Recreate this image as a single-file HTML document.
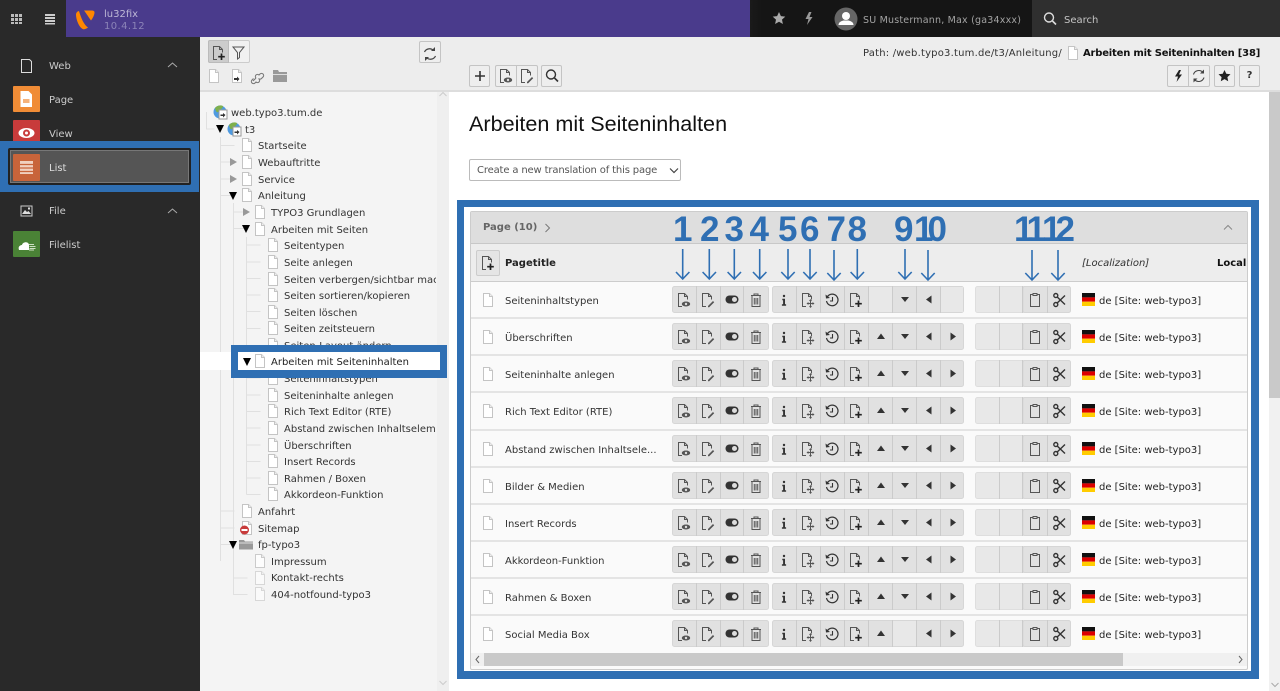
<!DOCTYPE html>
<html lang="de"><head><meta charset="utf-8"><title>TYPO3 List</title>
<style>
*{box-sizing:border-box}
html,body{margin:0;padding:0;width:1280px;height:691px;overflow:hidden;background:#fff}
body{position:relative;font:10px/16px "DejaVu Sans","Liberation Sans",sans-serif;color:#333}
.a{position:absolute}
.x{position:absolute;white-space:nowrap}
svg{display:block;overflow:visible}
.i{fill:none;stroke:#555;stroke-width:1;}
.m{color:#ccc;left:49px}
.t{position:absolute;white-space:nowrap;height:16px;line-height:16px;color:#333}
.l0{left:58px}.l1{left:71px}.l2{left:84px}
.n{position:absolute;top:212px;font:bold 35px/36px "Liberation Sans",sans-serif;color:#2f6fb3;letter-spacing:-1px}
.r{position:absolute;left:471px;width:776px;height:37px;background:#fafafa;border-bottom:2px solid #e4e4e4}
.r .p{position:absolute;left:34px;top:12px;line-height:16px;white-space:nowrap}
.r .f{position:absolute;left:628px;top:12px;line-height:16px;white-space:nowrap;color:#222}
.btn{position:absolute;background:#eee;border:1px solid #c4c4c4;border-radius:2px;height:22px}
</style></head><body>

<svg width="0" height="0" style="position:absolute">
<defs>
<g id="pg"><path d="M3.500 1.500h6l3 3v10h-9z" fill="#fff" stroke="#c4c4c4"/><path d="M9.500 1.500v3h3" fill="#eee" stroke="#c4c4c4"/></g>
<g id="doc"><path d="M6 14.500H2.500v-13h6l3 3v3" class="i"/><path d="M8.500 1.500v3h3" class="i"/></g>
<g id="dv"><use href="#doc"/><ellipse cx="10" cy="12" rx="4.200" ry="2.500" fill="#555"/><circle cx="10" cy="12" r="1.200" fill="#ddd"/></g>
<g id="de"><use href="#doc"/><path d="M8 14l5-5 1.200 1.200-5 5H8z" fill="#555"/></g>
<g id="tg"><rect x="1.500" y="4" width="13" height="8" rx="4" fill="#333"/><circle cx="10.500" cy="8" r="2.500" fill="#ddd"/></g>
<g id="tr"><path d="M3 3.500h10M6 3.500V2h4v1.500M4 3.500v11h8v-11M6.300 6v6.500M8 6v6.500M9.700 6v6.500" class="i"/></g>
<g id="inf"><circle cx="8" cy="4" r="1.200" fill="#333"/><path d="M6.300 6.800h2.700v5.500h1.100v1.400H5.900v-1.400h1.200V8.200h-.8z" fill="#333"/></g>
<g id="dm"><use href="#doc"/><path d="M10.500 8v7.500M7 11.500h7" stroke="#555" stroke-width="1.100"/><path d="M10.500 7l-1.500 2h3zM10.500 16l-1.500-2h3zM6.500 11.500l2-1.500v3zM14.500 11.500l-2-1.500v3z" fill="#555"/></g>
<g id="hi"><path d="M3.500 4.500A5.800 5.800 0 1 1 2.500 9" fill="none" stroke="#333" stroke-width="1.200"/><path d="M1.500 2.500l.5 4 4-.5z" fill="#333"/><path d="M8.500 5v4H6" fill="none" stroke="#333" stroke-width="1.100"/></g>
<g id="dp"><use href="#doc"/><path d="M10.500 8.500v6.500M7.200 11.700h6.600" stroke="#222" stroke-width="1.700"/></g>
<g id="up"><path d="M8 5l4 5.500H4z" fill="#333"/></g>
<g id="dn"><path d="M8 10.500L4 5.500h8z" fill="#333"/></g>
<g id="lf"><path d="M5 8l5.500-4v8z" fill="#333"/></g>
<g id="rt"><path d="M11 8L5.500 4v8z" fill="#333"/></g>
<g id="cl"><path d="M6 2.500H3.500v12h9v-12H10" class="i"/><rect x="6" y="1.500" width="4" height="2" fill="#ddd" stroke="#555"/></g>
<g id="sc"><circle cx="4.800" cy="3.500" r="2" fill="none" stroke="#333" stroke-width="1.400"/><circle cx="4.800" cy="12.500" r="2" fill="none" stroke="#333" stroke-width="1.400"/><path d="M6.200 5l7.800 7.500M6.200 11L14 3.500" stroke="#333" stroke-width="1.400"/></g>
<g id="fl"><rect width="13" height="4.400" fill="#111"/><rect y="4.400" width="13" height="4.300" fill="#d00"/><rect y="8.700" width="13" height="4.300" fill="#fc0"/></g>
<g id="g1">
<rect x=".5" y=".5" width="96" height="26" rx="2" fill="#e1e1e1" stroke="#d6d6d6"/>
<path d="M24.500 0v27M48.500 0v27M71.500 0v27" stroke="#cbcbcb"/>
<use href="#dv" x="4" y="6"/><use href="#de" x="28" y="6"/><use href="#tg" x="52" y="5.500"/><use href="#tr" x="76" y="6"/>
</g>
<g id="g2">
<rect x="100.500" y=".5" width="191" height="26" rx="2" fill="#e1e1e1" stroke="#d6d6d6"/>
<path d="M124.500 0v27M148.500 0v27M172.500 0v27M196.500 0v27M220.500 0v27M244.500 0v27M268.500 0v27" stroke="#cbcbcb"/>
<use href="#inf" x="104" y="6"/><use href="#dm" x="128" y="6"/><use href="#hi" x="152" y="6"/><use href="#dp" x="176" y="6"/>
</g>
<g id="g3">
<rect x="303.500" y=".5" width="95" height="26" rx="2" fill="#e8e8e8" stroke="#dedede"/>
<rect x="351" y=".5" width="47.500" height="26" rx="2" fill="#e1e1e1" stroke="#d6d6d6"/>
<path d="M327.500 0v27M350.500 0v27M375.500 0v27" stroke="#cbcbcb"/>
<use href="#cl" x="355" y="6"/><use href="#sc" x="379" y="6"/>
</g>
<g id="A"><use href="#g1"/><use href="#g2"/><use href="#g3"/>
<rect x="197" y="1" width="23" height="25" fill="#e8e8e8"/><rect x="269" y="1" width="22" height="25" fill="#e8e8e8"/>
<use href="#dn" x="225" y="5.500"/><use href="#lf" x="249" y="5.500"/></g>
<g id="B"><use href="#g1"/><use href="#g2"/><use href="#g3"/>
<use href="#up" x="201" y="5.500"/><use href="#dn" x="225" y="5.500"/><use href="#lf" x="249" y="5.500"/><use href="#rt" x="273" y="5.500"/></g>
<g id="C"><use href="#g1"/><use href="#g2"/><use href="#g3"/>
<rect x="221" y="1" width="23" height="25" fill="#e8e8e8"/>
<use href="#up" x="201" y="5.500"/><use href="#lf" x="249" y="5.500"/><use href="#rt" x="273" y="5.500"/></g>
<g id="gb"><circle cx="7" cy="7" r="6.500" fill="#4f9ae0"/><path d="M2 3a6.500 6.500 0 0 1 8-2c0 3-3 3-4 5s-3 2-4-3z" fill="#7fb04c"/><rect x="6" y="5" width="8" height="9" fill="#fff" stroke="#999"/><path d="M7.500 9.500h2.500V8l2.500 2-2.500 2.500V11H7.500z" fill="#333"/></g>
</defs>
</svg>

<!-- top bar -->
<div class="a" style="left:0;top:0;width:66px;height:37px;background:#292929"></div>
<div class="a" style="left:66px;top:0;width:684px;height:37px;background:#4a3b8c"></div>
<div class="a" style="left:750px;top:0;width:282px;height:37px;background:linear-gradient(90deg,#1a1a1a 0,#151515 12px)"></div>
<div class="a" style="left:1032px;top:0;width:248px;height:37px;background:#2f2f2f"></div>
<svg class="a" style="left:0;top:0" width="1280" height="37">
<g fill="#bbb"><rect x="11" y="14" width="3" height="3"/><rect x="15" y="14" width="3" height="3"/><rect x="19" y="14" width="3" height="3"/><rect x="11" y="18" width="3" height="3"/><rect x="15" y="18" width="3" height="3"/><rect x="19" y="18" width="3" height="3"/><rect x="11" y="22" width="3" height="2"/><rect x="15" y="22" width="3" height="2"/><rect x="19" y="22" width="3" height="2"/></g>
<g fill="#ccc"><rect x="45" y="14" width="10" height="2"/><rect x="45" y="17" width="10" height="2"/><rect x="45" y="20" width="10" height="2"/><rect x="45" y="23" width="10" height="1.500"/></g>
<path d="M76 14.500c0-1.500 1-3 3-3.500 2 7 5 14 9 16.500-1.500 1-3 1.800-4 1.800-4 0-8-9-8-14.800zM84 10.500h7.500c2 0 3 .5 3 2 0 2-1.500 5.500-3.500 8-2.500-3.500-5-7.500-7-10z" fill="#ff8700"/>
<path d="M779 12l1.900 4.100 4.400.5-3.300 3 .9 4.400-3.900-2.300-3.900 2.300.9-4.400-3.300-3 4.400-.5z" fill="#aaa"/>
<path d="M809 12l-3.500 7h3l-1.500 6 5.500-8h-3l2-5z" fill="#999"/>
<circle cx="846" cy="19" r="11.500" fill="#666"/>
<circle cx="846" cy="16" r="4" fill="#fff"/><path d="M838.500 25c0-3 3-4 5-4.500h5c2 .5 5 1.500 5 4.500z" fill="#fff"/>
<circle cx="1049" cy="17.500" r="4.500" fill="none" stroke="#ddd" stroke-width="1.400"/><path d="M1052.500 21l3.500 3.500" stroke="#ddd" stroke-width="1.600"/>
</svg>
<div class="x" style="left:104px;top:7px;color:#bdb8d6;font-size:10px">lu32fix</div>
<div class="x" style="left:104px;top:19px;color:#8c84b8;font-size:10px;letter-spacing:.4px">10.4.12</div>
<div class="x" style="left:863px;top:13px;color:#a3a3a3;font-size:9.500px;letter-spacing:.2px">SU Mustermann, Max (ga34xxx)</div>
<div class="x" style="left:1064px;top:13px;color:#c4c4c4">Search</div>

<!-- module menu -->
<div class="a" style="left:0;top:37px;width:200px;height:654px;background:#292929"></div>
<svg class="a" style="left:0;top:37px" width="200" height="654">
<path d="M21.500 22.500h8l2 2v11h-10z" fill="none" stroke="#ddd"/>
<path d="M168 30l4.500-4 4.500 4" fill="none" stroke="#aaa"/>
<rect x="13" y="49" width="27" height="26" rx="1" fill="#f08c36"/>
<path d="M20.500 54h8l3.500 3.500V70H20.500z" fill="#fff"/><rect x="23" y="62" width="6.500" height="4" fill="#f5b27a"/>
<rect x="13" y="83" width="27" height="26" rx="1" fill="#c83b3b"/>
<ellipse cx="26.500" cy="96" rx="8" ry="5" fill="#fff"/><circle cx="26.500" cy="96" r="3.500" fill="#c83b3b"/><circle cx="26.500" cy="96" r="1.500" fill="#fff"/>
<path d="M168 176l4.500-4 4.500 4" fill="none" stroke="#aaa"/>
<rect x="21" y="169" width="11" height="10" fill="none" stroke="#ccc"/><path d="M22 177l3-4 2 2 1.500-1 2.500 3z" fill="#ddd"/><rect x="28" y="170.500" width="2" height="2" fill="#ddd"/>
<rect x="13" y="194" width="27" height="26" rx="1" fill="#4a8236"/>
<path d="M19 213c-1.500-4 2-5 3-5 .5-3 6-4 7-.5v5.500z" fill="#fff"/><path d="M29 207.500h5M29.500 209.500h6M29.500 211.500h6M29 213h5" stroke="#cfe0c4"/>
</svg>
<div class="x m" style="top:59px">Web</div>
<div class="x m" style="top:93px">Page</div>
<div class="x m" style="top:127px">View</div>
<div class="x m" style="top:204px">File</div>
<div class="x m" style="top:238px">Filelist</div>
<div class="a" style="left:0;top:141px;width:199px;height:51px;background:#2f6fb3"></div>
<div class="a" style="left:8px;top:148px;width:183px;height:37px;background:#555;border:2px solid #222;box-shadow:inset 0 0 0 1px #777;border-radius:2px"></div>
<svg class="a" style="left:13px;top:154px" width="27" height="27"><rect width="27" height="27" rx="1" fill="#c8643a"/><path d="M7 7h13v13H7z" fill="#f0d0bf"/><path d="M6 10.500h15M6 14h15M6 17.500h15" stroke="#c8643a" stroke-width="1.200"/></svg>
<div class="x" style="left:49px;top:161px;color:#ddd">List</div>

<!-- tree pane -->
<div class="a" style="left:200px;top:37px;width:249px;height:654px;background:#f4f4f4"></div>
<div class="a" style="left:200px;top:37px;width:249px;height:55px;background:#ededed;border-bottom:2px solid #ddd"></div>
<div class="a" style="left:437px;top:92px;width:12px;height:599px;background:#efefef"></div>
<div class="a" style="left:208px;top:40px;width:42px;height:23px;background:#f1f1f1;border:1px solid #ccc;border-radius:2px"></div>
<div class="a" style="left:208px;top:40px;width:21px;height:23px;background:#ccc;border:1px solid #bbb;border-radius:2px 0 0 2px"></div>
<div class="btn" style="left:419px;top:41px;width:22px"></div>
<svg class="a" style="left:200px;top:37px" width="249" height="654">
<use href="#dp" x="11" y="8"/>
<path d="M33 10h11l-4.500 5.500v5l-2 1.500v-6.500z" fill="none" stroke="#555"/>
<path d="M224.500 15a5.500 5.500 0 0 1 9-1.500M235.500 19a5.500 5.500 0 0 1-9 1.500" fill="none" stroke="#444" stroke-width="1.200"/><path d="M235 10v4h-4zM225 24v-4h4z" fill="#444"/>
<use href="#pg" x="6" y="31"/>
<use href="#pg" x="29" y="31"/><path d="M34 41h3v-1.500l2.500 2.500-2.500 2.500V43h-3z" fill="#333"/>
<path d="M53 44l3-3M56 41a2 2 0 0 1 3-3l1-1a2 2 0 0 1 3 3l-1.500 1.500a2 2 0 0 1-3 0M59 42a2 2 0 0 1-3 3l-1 1a2 2 0 0 1-3-3l1.500-1.500" fill="none" stroke="#777" stroke-width="1.100"/>
<path d="M73 33h5l1 2h8v10H73z" fill="#999"/><rect x="73" y="37" width="14" height="1" fill="#ddd"/>
<path d="M239.500 59l3.500-3.500 3.500 3.500" fill="none" stroke="#ccc"/>
<path d="M239.500 644l3.500 3.500 3.500-3.500" fill="none" stroke="#ccc"/>
<!-- tree lines -->
<g stroke="#e0e0e0" fill="none">
<path d="M6.500 75v17h8M20.500 100v424M20.500 108.500h14M20.500 125h14M20.500 142h14M20.500 158.500h14M20.500 474h14M20.500 491h14M20.500 507.500h14"/>
<path d="M33.500 166v375M33.500 175h14M33.500 191.500h14M33.500 524.500v33.500M33.500 541h14M33.500 557.500h14"/>
<path d="M46.500 200v257.500M46.500 208h14M46.500 225h14M46.500 241.500h14M46.500 258h14M46.500 274.500h14M46.500 291.500h14M46.500 341h14M46.500 358h14M46.500 374.500h14M46.500 391h14M46.500 408h14M46.500 424.500h14M46.500 441h14M46.500 457.500h14"/>
</g>
<use href="#gb" x="13" y="68"/><use href="#gb" x="27" y="85"/>
<path d="M16 88h8l-4 8z" fill="#000"/>
<use href="#pg" x="39" y="100"/>
<path d="M30 121l7 4-7 4z" fill="#999"/><use href="#pg" x="39" y="117"/>
<path d="M30 138l7 4-7 4z" fill="#999"/><use href="#pg" x="39" y="134"/>
<path d="M29 155h8l-4 8z" fill="#000"/><use href="#pg" x="39" y="150"/>
<path d="M43 171l7 4-7 4z" fill="#999"/><use href="#pg" x="52" y="167"/>
<path d="M42 188h8l-4 8z" fill="#000"/><use href="#pg" x="52" y="184"/>
<use href="#pg" x="65" y="200"/><use href="#pg" x="65" y="217"/><use href="#pg" x="65" y="234"/><use href="#pg" x="65" y="250"/><use href="#pg" x="65" y="267"/><use href="#pg" x="65" y="283"/><use href="#pg" x="65" y="300"/>
<use href="#pg" x="65" y="333"/><use href="#pg" x="65" y="350"/><use href="#pg" x="65" y="366"/><use href="#pg" x="65" y="383"/><use href="#pg" x="65" y="400"/><use href="#pg" x="65" y="416"/><use href="#pg" x="65" y="433"/><use href="#pg" x="65" y="449"/>
<use href="#pg" x="39" y="466"/><use href="#pg" x="39" y="483"/><circle cx="44.500" cy="493" r="4.500" fill="#c83b3b"/><rect x="41.500" y="492" width="6" height="2" fill="#fff"/>
<path d="M29 504h8l-4 8z" fill="#000"/><path d="M39 503h5l1 1.500h8v8H39z" fill="#999"/><rect x="39" y="505.500" width="14" height="1" fill="#ddd"/>
<g opacity=".85"><use href="#pg" x="52" y="516"/></g><g opacity=".6"><use href="#pg" x="52" y="533"/><use href="#pg" x="52" y="549"/></g>
</svg>
<div class="a" style="left:200px;top:93px;width:236px;height:598px;overflow:hidden">
<div class="t" style="left:31px;top:13px">web.typo3.tum.de</div>
<div class="t" style="left:45px;top:30px">t3</div>
<div class="t l0" style="top:46px">Startseite</div>
<div class="t l0" style="top:63px">Webauftritte</div>
<div class="t l0" style="top:80px">Service</div>
<div class="t l0" style="top:96px">Anleitung</div>
<div class="t l1" style="top:113px">TYPO3 Grundlagen</div>
<div class="t l1" style="top:130px">Arbeiten mit Seiten</div>
<div class="t l2" style="top:146px">Seitentypen</div>
<div class="t l2" style="top:163px">Seite anlegen</div>
<div class="t l2" style="top:180px">Seiten verbergen/sichtbar machen</div>
<div class="t l2" style="top:196px">Seiten sortieren/kopieren</div>
<div class="t l2" style="top:213px">Seiten löschen</div>
<div class="t l2" style="top:229px">Seiten zeitsteuern</div>
<div class="t l2" style="top:246px">Seiten-Layout ändern</div>
<div class="t l2" style="top:279px">Seiteninhaltstypen</div>
<div class="t l2" style="top:296px">Seiteninhalte anlegen</div>
<div class="t l2" style="top:312px">Rich Text Editor (RTE)</div>
<div class="t l2" style="top:329px">Abstand zwischen Inhaltselementen</div>
<div class="t l2" style="top:346px">Überschriften</div>
<div class="t l2" style="top:362px">Insert Records</div>
<div class="t l2" style="top:379px">Rahmen / Boxen</div>
<div class="t l2" style="top:395px">Akkordeon-Funktion</div>
<div class="t l0" style="top:412px">Anfahrt</div>
<div class="t l0" style="top:429px">Sitemap</div>
<div class="t l0" style="top:445px">fp-typo3</div>
<div class="t l1" style="top:462px">Impressum</div>
<div class="t l1" style="top:478px">Kontakt-rechts</div>
<div class="t l1" style="top:495px">404-notfound-typo3</div>
</div>
<!-- tree highlight -->
<div class="a" style="left:200px;top:352px;width:31px;height:18px;background:#fff"></div>
<div class="a" style="left:231px;top:345px;width:216px;height:33px;background:#fff;border:7px solid #2f6fb3;border-width:7px 7px 8px 7px"></div>
<svg class="a" style="left:240px;top:353px" width="30" height="17"><path d="M3 5h8l-4 8z" fill="#000"/><use href="#pg" x="12" y="0"/></svg>
<div class="t" style="left:271px;top:355px;color:#222">Arbeiten mit Seiteninhalten</div>

<!-- doc header -->
<div class="a" style="left:449px;top:37px;width:831px;height:55px;background:#ededed;border-bottom:2px solid #ddd"></div>
<div class="x" style="left:863px;top:46px;color:#333;letter-spacing:.2px">Path: /web.typo3.tum.de/t3/Anleitung/</div>
<svg class="a" style="left:1065px;top:45px" width="16" height="16"><use href="#pg"/></svg>
<div class="x" style="left:1083px;top:46px;font-weight:bold;color:#111;letter-spacing:-.2px">Arbeiten mit Seiteninhalten [38]</div>
<div class="btn" style="left:469px;top:65px;width:21px"></div>
<div class="btn" style="left:495px;top:65px;width:43px"></div>
<div class="btn" style="left:541px;top:65px;width:21px"></div>
<div class="btn" style="left:1167px;top:65px;width:43px"></div>
<div class="btn" style="left:1214px;top:65px;width:21px"></div>
<div class="btn" style="left:1239px;top:65px;width:21px"></div>
<svg class="a" style="left:0;top:59px" width="1280" height="30">
<path d="M480 12v10M475 17h10" stroke="#333" stroke-width="1.600"/>
<path d="M516.500 6v22" stroke="#c4c4c4"/>
<use href="#dv" x="498" y="9"/><use href="#de" x="519" y="9"/>
<circle cx="551" cy="15.500" r="4.500" fill="none" stroke="#333" stroke-width="1.400"/><path d="M554.500 19l3.500 3.500" stroke="#333" stroke-width="1.600"/>
<path d="M1188.500 6v22" stroke="#c4c4c4"/>
<path d="M1179 11l-4 6.500h3l-1.500 5.500 5.500-7.500h-3l2-4.500z" fill="#222"/>
<path d="M1193.500 15.500a5.500 5.500 0 0 1 9.500-2M1204 18.500a5.500 5.500 0 0 1-9.500 2" fill="none" stroke="#444" stroke-width="1.100"/><path d="M1204 10.500v4h-4zM1193.500 23.500v-4h4z" fill="#444"/>
<path d="M1224.500 11l1.800 3.800 4.200.5-3.100 2.800.8 4.100-3.700-2.100-3.700 2.100.8-4.100-3.100-2.800 4.200-.5z" fill="#222"/>
</svg>
<div class="x" style="left:1239px;top:68px;width:21px;text-align:center;font-weight:bold;color:#333">?</div>

<!-- scrollbars -->
<div class="a" style="left:1269px;top:92px;width:11px;height:599px;background:#f1f1f1"></div>
<div class="a" style="left:1269px;top:92px;width:11px;height:306px;background:#c9c9c9"></div>
<svg class="a" style="left:1270px;top:680px" width="10" height="10"><path d="M1.500 3l3.500 3.500L8.500 3" fill="none" stroke="#aaa"/></svg>

<!-- content -->
<div class="x" style="left:469px;top:109px;font:21.600px/30px 'Liberation Sans',sans-serif;color:#111">Arbeiten mit Seiteninhalten</div>
<div class="a" style="left:469px;top:159px;width:212px;height:22px;background:#fff;border:1px solid #bbb;border-radius:2px"></div>
<div class="x" style="left:477px;top:163px;color:#555;letter-spacing:-.15px">Create a new translation of this page</div>
<svg class="a" style="left:669px;top:167px" width="12" height="8"><path d="M1 1.500l4 4 4-4" fill="none" stroke="#444" stroke-width="1.200"/></svg>

<!-- blue frame -->
<div class="a" style="left:457px;top:200px;width:802px;height:479px;border:7px solid #2f6fb3;border-right-width:8px;border-bottom-width:8px;background:#fff"></div>
<div class="a" style="left:470px;top:211px;width:778px;height:459px;border:1px solid #ccc;background:#fafafa;border-radius:2px"></div>
<div class="a" style="left:471px;top:212px;width:776px;height:32px;background:#dedede;border-bottom:1px solid #c8c8c8"></div>
<div class="a" style="left:471px;top:244px;width:776px;height:38px;background:#ededed;border-bottom:1px solid #ccc"></div>
<div class="x" style="left:483px;top:220px;font-weight:bold;color:#666">Page (10)</div>
<svg class="a" style="left:544px;top:223px" width="8" height="10"><path d="M1.500 1l4 4-4 4" fill="none" stroke="#777"/></svg>
<svg class="a" style="left:1223px;top:224px" width="10" height="7"><path d="M1 5.500l4-4 4 4" fill="none" stroke="#888"/></svg>
<div class="a" style="left:476px;top:250px;width:24px;height:26px;background:#e5e5e5;border:1px solid #ccc;border-radius:2px"></div>
<svg class="a" style="left:480px;top:255px" width="16" height="16"><use href="#dp"/></svg>
<div class="x" style="left:505px;top:256px;font-weight:bold;color:#222">Pagetitle</div>
<div class="x" style="left:1082px;top:256px;font-style:italic;color:#333">[Localization]</div>
<div class="a" style="left:1217px;top:256px;width:29px;height:16px;overflow:hidden;font-weight:bold;color:#111;white-space:nowrap">Localization</div>

<!-- rows -->
<div class="r" style="top:282px"><svg class="a" style="left:9px;top:10px" width="16" height="16"><use href="#pg"/></svg><span class="p">Seiteninhaltstypen</span><svg class="a" style="left:201px;top:4px" width="400" height="27"><use href="#A"/></svg><svg class="a" style="left:611px;top:11px" width="13" height="13"><use href="#fl"/></svg><span class="f">de [Site: web-typo3]</span></div>
<div class="r" style="top:319px"><svg class="a" style="left:9px;top:10px" width="16" height="16"><use href="#pg"/></svg><span class="p">Überschriften</span><svg class="a" style="left:201px;top:4px" width="400" height="27"><use href="#B"/></svg><svg class="a" style="left:611px;top:11px" width="13" height="13"><use href="#fl"/></svg><span class="f">de [Site: web-typo3]</span></div>
<div class="r" style="top:356px"><svg class="a" style="left:9px;top:10px" width="16" height="16"><use href="#pg"/></svg><span class="p">Seiteninhalte anlegen</span><svg class="a" style="left:201px;top:4px" width="400" height="27"><use href="#B"/></svg><svg class="a" style="left:611px;top:11px" width="13" height="13"><use href="#fl"/></svg><span class="f">de [Site: web-typo3]</span></div>
<div class="r" style="top:393px;height:38px"><svg class="a" style="left:9px;top:10px" width="16" height="16"><use href="#pg"/></svg><span class="p">Rich Text Editor (RTE)</span><svg class="a" style="left:201px;top:4px" width="400" height="27"><use href="#B"/></svg><svg class="a" style="left:611px;top:11px" width="13" height="13"><use href="#fl"/></svg><span class="f">de [Site: web-typo3]</span></div>
<div class="r" style="top:431px"><svg class="a" style="left:9px;top:10px" width="16" height="16"><use href="#pg"/></svg><span class="p">Abstand zwischen Inhaltsele...</span><svg class="a" style="left:201px;top:4px" width="400" height="27"><use href="#B"/></svg><svg class="a" style="left:611px;top:11px" width="13" height="13"><use href="#fl"/></svg><span class="f">de [Site: web-typo3]</span></div>
<div class="r" style="top:468px"><svg class="a" style="left:9px;top:10px" width="16" height="16"><use href="#pg"/></svg><span class="p">Bilder &amp; Medien</span><svg class="a" style="left:201px;top:4px" width="400" height="27"><use href="#B"/></svg><svg class="a" style="left:611px;top:11px" width="13" height="13"><use href="#fl"/></svg><span class="f">de [Site: web-typo3]</span></div>
<div class="r" style="top:505px"><svg class="a" style="left:9px;top:10px" width="16" height="16"><use href="#pg"/></svg><span class="p">Insert Records</span><svg class="a" style="left:201px;top:4px" width="400" height="27"><use href="#B"/></svg><svg class="a" style="left:611px;top:11px" width="13" height="13"><use href="#fl"/></svg><span class="f">de [Site: web-typo3]</span></div>
<div class="r" style="top:542px"><svg class="a" style="left:9px;top:10px" width="16" height="16"><use href="#pg"/></svg><span class="p">Akkordeon-Funktion</span><svg class="a" style="left:201px;top:4px" width="400" height="27"><use href="#B"/></svg><svg class="a" style="left:611px;top:11px" width="13" height="13"><use href="#fl"/></svg><span class="f">de [Site: web-typo3]</span></div>
<div class="r" style="top:579px"><svg class="a" style="left:9px;top:10px" width="16" height="16"><use href="#pg"/></svg><span class="p">Rahmen &amp; Boxen</span><svg class="a" style="left:201px;top:4px" width="400" height="27"><use href="#B"/></svg><svg class="a" style="left:611px;top:11px" width="13" height="13"><use href="#fl"/></svg><span class="f">de [Site: web-typo3]</span></div>
<div class="r" style="top:616px;height:37px;border:0"><svg class="a" style="left:9px;top:10px" width="16" height="16"><use href="#pg"/></svg><span class="p">Social Media Box</span><svg class="a" style="left:201px;top:4px" width="400" height="27"><use href="#C"/></svg><svg class="a" style="left:611px;top:11px" width="13" height="13"><use href="#fl"/></svg><span class="f">de [Site: web-typo3]</span></div>

<!-- table h-scroll -->
<div class="a" style="left:471px;top:653px;width:776px;height:13px;background:#f0f0f0"></div>
<div class="a" style="left:484px;top:653px;width:639px;height:13px;background:#c9c9c9"></div>
<svg class="a" style="left:474px;top:655px" width="8" height="9"><path d="M5 1L2 4.500 5 8" fill="none" stroke="#666"/></svg>
<svg class="a" style="left:1236px;top:655px" width="8" height="9"><path d="M3 1l3 3.500L3 8" fill="none" stroke="#666"/></svg>

<!-- annotations -->
<div class="n" style="left:673px">1</div><div class="n" style="left:700px">2</div><div class="n" style="left:724.500px">3</div><div class="n" style="left:749.500px">4</div>
<div class="n" style="left:778px">5</div><div class="n" style="left:800px">6</div><div class="n" style="left:826.500px">7</div><div class="n" style="left:847.500px">8</div>
<div class="n" style="left:894px">9</div><div class="n" style="left:914px;letter-spacing:-6px">10</div>
<div class="n" style="left:1014px;letter-spacing:-5px">11</div><div class="n" style="left:1042px;letter-spacing:-6px">12</div>
<svg class="a" style="left:0;top:0;pointer-events:none" width="1280" height="691">
<g fill="none" stroke="#2f6fb3" stroke-width="1.600">
<path d="M682.700 249v30M676 272l6.700 7 6.700-7"/>
<path d="M709.300 249v30M702.600 272l6.700 7 6.700-7"/>
<path d="M734.300 249v30M727.600 272l6.700 7 6.700-7"/>
<path d="M759.700 249v30M753 272l6.700 7 6.700-7"/>
<path d="M788 249v30M781.300 272l6.700 7 6.700-7"/>
<path d="M810 249v30M803.300 272l6.700 7 6.700-7"/>
<path d="M834 250v30M827.300 273l6.700 7 6.700-7"/>
<path d="M857.300 249v30M850.600 272l6.700 7 6.700-7"/>
<path d="M905 249v30M898.300 272l6.700 7 6.700-7"/>
<path d="M928 250v30M921.300 273l6.700 7 6.700-7"/>
<path d="M1032 250v30M1025.300 273l6.700 7 6.700-7"/>
<path d="M1058 250v30M1051.300 273l6.700 7 6.700-7"/>
</g>
</svg>
</body></html>
